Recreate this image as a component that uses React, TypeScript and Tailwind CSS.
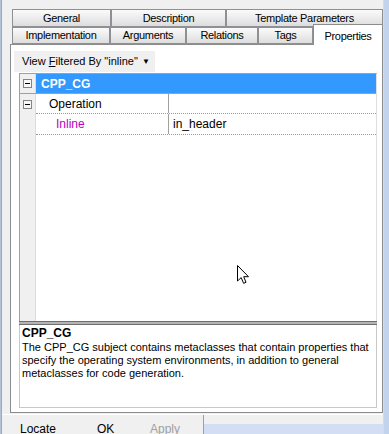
import type { FC } from "react";

type TabProps = { label: string; w: string; selected?: boolean };

const Tab: FC<TabProps> = ({ label, w, selected }) => {
	if (selected) {
		return (
			<div
				className={`${w} relative z-10 -mt-[3px] h-[21px] flex items-start justify-center pt-[3px] bg-white border border-b-0 border-[#8c8c8c]`}
			>
				{label}
			</div>
		);
	}
	return (
		<div
			className={`${w} h-full flex items-center justify-center border border-[#8f9096] bg-linear-to-b from-[#fbfbfb] to-[#dddddd]`}
		>
			{label}
		</div>
	);
};

const Gutter: FC<{ box?: boolean }> = ({ box }) => (
	<div className="w-[16px] shrink-0 self-stretch flex items-center justify-center bg-[#f0f0f0] border-r border-[#dcdcdc]">
		{box && (
			<div className="w-[9px] h-[9px] border border-[#848484] bg-[#f8f8f8] flex items-center justify-center">
				<div className="w-[5px] h-px bg-black" />
			</div>
		)}
	</div>
);

const Cursor: FC = () => (
	<svg className="absolute left-[237px] top-[265px]" width="13" height="20" viewBox="0 0 13 20">
		<path
			d="M0.5 0.5 L0.5 16 L4.2 12.6 L6.6 18.3 L9 17.3 L6.7 11.7 L11.5 11.7 Z"
			fill="#fff"
			stroke="#000"
			strokeWidth="1"
			strokeLinejoin="miter"
		/>
	</svg>
);

const App: FC = () => {
	return (
		<div className="relative w-[389px] h-[434px] overflow-hidden flex flex-row bg-[#f0f0f0] text-black text-[11px] font-['Liberation_Sans',Arial,sans-serif]">
			<div className="w-[2px] shrink-0 border-l border-[#b3c2d8] bg-[#a7a7a7]" />

			<div className="w-[381px] shrink-0 flex flex-col">
				{/* tabs */}
				<div className="mt-[9px] ml-[10px] h-[18px] flex flex-row tracking-[-0.3px]">
					<Tab label="General" w="w-[99px]" />
					<Tab label="Description" w="w-[115px]" />
					<Tab label="Template Parameters" w="w-[157px]" />
				</div>
				<div className="ml-[10px] h-[17px] flex flex-row tracking-[-0.3px]">
					<Tab label="Implementation" w="w-[98px]" />
					<Tab label="Arguments" w="w-[76px]" />
					<Tab label="Relations" w="w-[72px]" />
					<Tab label="Tags" w="w-[55px]" />
					<Tab label="Properties" w="w-[70px]" selected />
				</div>

				{/* panel */}
				<div className="ml-[8px] w-[373px] h-[369px] border border-[#8c8c8c] bg-white flex flex-col">
					<div className="ml-[3px] mt-[6px] w-[141px] h-[21px] bg-[#f0f0f0] flex items-center pl-[8px] pr-[5px]">
						<span>
							View <span className="underline">F</span>iltered By "inline"
						</span>
						<span className="ml-auto text-[8px]">▼</span>
					</div>

					<div className="ml-[8px] mt-px w-[358px] h-[248px] flex flex-col border-t border-l border-[#a0a0a0] border-r border-r-[#dedede] text-[12px]">
						<div className="h-[20px] flex flex-row border-b border-[#a0a0a0]">
							<Gutter box />
							<div className="flex-1 bg-[#3399ff] text-white font-bold flex items-center pl-[5px]">CPP_CG</div>
						</div>
						<div className="h-[20px] flex flex-row">
							<Gutter box />
							<div className="flex-1 flex flex-row border-b border-dotted border-[#9a9a9a]">
								<div className="w-[133px] border-r border-[#a0a0a0] flex items-center pl-[13px]">Operation</div>
								<div className="flex-1" />
							</div>
						</div>
						<div className="h-[21px] flex flex-row">
							<Gutter />
							<div className="flex-1 flex flex-row border-b border-dotted border-[#9a9a9a]">
								<div className="w-[133px] border-r border-[#a0a0a0] flex items-center pl-[20px] text-[#c000c0]">Inline</div>
								<div className="flex-1 flex items-center pl-[4px]">in_header</div>
							</div>
						</div>
						<div className="flex-1 flex flex-row">
							<Gutter />
							<div className="flex-1" />
						</div>
					</div>

					<div className="ml-[8px] w-[358px] h-[4px] border-t border-b border-[#6e6e6e] bg-[#b4b4b4]" />

					<div className="ml-[8px] w-[358px] h-[83px] border border-[#c8c8c8] border-t-0 bg-white pl-[2px] leading-[13px]">
						<div className="font-bold text-[12px] leading-[15px] pt-px">CPP_CG</div>
						<div>
							The CPP_CG subject contains metaclasses that contain properties that specify the operating system environments, in
							addition to general metaclasses for code generation.
						</div>
					</div>
				</div>

				{/* bottom buttons */}
				<div className="mt-px h-[20px] flex flex-row border-t border-white text-[12px]">
					<div className="w-[201px] flex flex-row pl-[18px] pt-[5px]">
						<span className="w-[77px]">Locate</span>
						<span className="w-[53px]">OK</span>
						<span className="text-[#a0a0a0]">Apply</span>
					</div>
					<div className="w-px bg-[#a0a0a0]" />
					<div className="flex-1 flex flex-col">
						<div className="h-[9px] bg-[#f0f0f0]" />
						<div className="flex-1 bg-[#d3ddf3]" />
					</div>
				</div>
			</div>

			<div className="flex-1 border-l border-[#dadada] bg-[#c2d3ee]" />

			<Cursor />
		</div>
	);
};

export default App;
